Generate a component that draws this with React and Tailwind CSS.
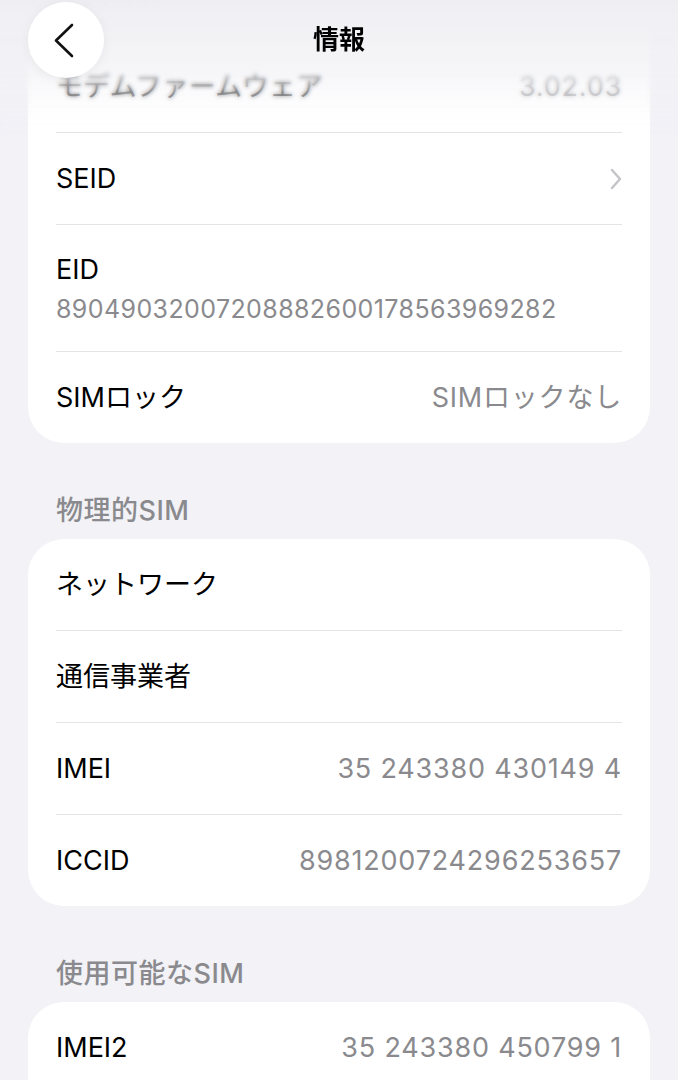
const font = "font-['Inter','Noto_Sans_CJK_JP',sans-serif]"

const Sep = () => <div className="mx-[28px] h-px bg-[#e3e3e8]" />

const Row = ({ label, value, chevron }) => (
    <div className="flex h-[91px] items-center justify-between px-[28px]">
        <span className="text-[27px] leading-[34px] text-black">{label}</span>
        {value && <span className="text-[27px] leading-[34px] tracking-[0.8px] text-[#8a8a8e]">{value}</span>}
        {chevron && (
            <svg width="14" height="22" viewBox="0 0 14 22" className="mr-[-1px]">
                <path d="M3 2 L11 11 L3 20" fill="none" stroke="#c4c4c8" strokeWidth="2.4" strokeLinecap="round" strokeLinejoin="round" />
            </svg>
        )}
    </div>
)

const SectionTitle = ({ children }) => (
    <div className="px-[56px] pt-[52px] pb-[12px]">
        <p className="text-[27px] leading-[32px] font-medium tracking-[0.5px] text-[#8a8a8e]">{children}</p>
    </div>
)

export default function App() {
    return (
        <div className={`relative h-[1080px] w-[678px] overflow-hidden bg-[#f2f2f7] ${font}`}>
            {/* list */}
            <div className="mx-[28px] mt-[-51px] overflow-hidden rounded-[36px] bg-white">
                <Row label="Bluetooth" value="A4:C3:37:8E:21:5B" />
                <Sep />
                <Row label="モデムファームウェア" value="3.02.03" />
                <Sep />
                <Row label="SEID" chevron />
                <Sep />
                <div className="h-[126px] px-[28px] pt-[28px]">
                    <p className="text-[27px] leading-[34px] text-black">EID</p>
                    <p className="mt-[6px] text-[25px] leading-[32px] tracking-[0.4px] text-[#8a8a8e]">89049032007208882600178563969282</p>
                </div>
                <Sep />
                <Row label="SIMロック" value="SIMロックなし" />
            </div>

            <SectionTitle>物理的SIM</SectionTitle>
            <div className="mx-[28px] overflow-hidden rounded-[36px] bg-white">
                <Row label="ネットワーク" />
                <Sep />
                <Row label="通信事業者" />
                <Sep />
                <Row label="IMEI" value="35 243380 430149 4" />
                <Sep />
                <Row label="ICCID" value="8981200724296253657" />
            </div>

            <SectionTitle>使用可能なSIM</SectionTitle>
            <div className="mx-[28px] overflow-hidden rounded-[36px] bg-white pb-[60px]">
                <Row label="IMEI2" value="35 243380 450799 1" />
            </div>

            {/* nav bar overlay */}
            <div className="pointer-events-none absolute inset-x-0 top-0 h-[135px] bg-gradient-to-b from-[#efeff3] via-[#f2f2f6]/75 to-transparent backdrop-blur-[2px] [mask-image:linear-gradient(to_bottom,black_55%,transparent)]" />
            <div className="absolute inset-x-0 top-0 flex h-[80px] items-center justify-center">
                <div className="absolute left-[28px] top-[2px] flex h-[76px] w-[76px] items-center justify-center rounded-full bg-white/95 shadow-[0_2px_12px_rgba(0,0,0,0.06)]">
                    <svg width="76" height="76" viewBox="0 0 76 76">
                        <path d="M44 23 L28 38.5 L44 54" fill="none" stroke="#111" strokeWidth="2.6" strokeLinecap="round" strokeLinejoin="round" />
                    </svg>
                </div>
                <h1 className="text-[26px] font-bold leading-[32px] text-black">情報</h1>
            </div>
        </div>
    )
}
